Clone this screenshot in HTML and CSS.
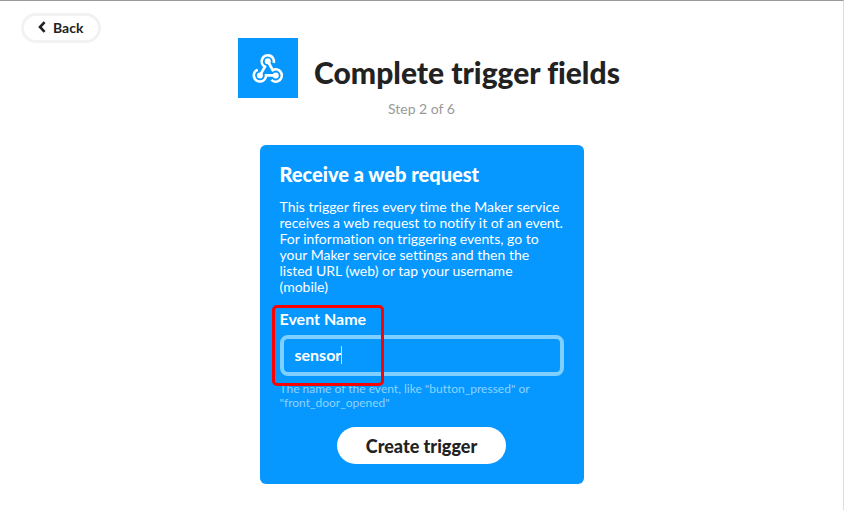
FILE: index.html
```html
<!DOCTYPE html>
<html lang="en">
<head>
<meta charset="utf-8">
<meta name="viewport" content="width=device-width, initial-scale=1">
<title>Complete trigger fields</title>
<link rel="stylesheet" href="styles.css">
</head>
<body>
<button class="back" type="button">
  <svg class="back-icon" viewBox="0 0 8 12" aria-hidden="true"><path d="M6.6 1.2 2 6l4.6 4.8"/></svg>
  Back
</button>
<main class="page">
  <header class="header">
    <div class="title-row">
      <div class="service">
        <svg class="service-icon" viewBox="0 0 31 30" aria-hidden="true">
          <path d="M7.7 21.7 12.5 13.3A5.9 5.9 0 1 1 21 9.6"/>
          <path d="M23 21.7H13.6A5.9 5.9 0 1 1 5.6 16.2"/>
          <path d="M15.3 8 20.1 16.6A5.9 5.9 0 1 1 18.8 26"/>
          <circle cx="15.3" cy="8" r="2.9"/>
          <circle cx="7.7" cy="21.7" r="2.9"/>
          <circle cx="23" cy="21.7" r="2.9"/>
        </svg>
      </div>
      <h1 class="title">Complete trigger fields</h1>
    </div>
    <p class="step">Step 2 of 6</p>
  </header>
  <form class="card">
    <h2 class="card-title">Receive a web request</h2>
    <p class="description">This trigger fires every time the Maker service<br>receives a web request to notify it of an event.<br>For information on triggering events, go to<br>your Maker service settings and then the<br>listed URL (web) or tap your username<br>(mobile)</p>
    <div class="field">
      <label class="label" for="event-name">Event Name</label>
      <input class="input" id="event-name" type="text" value="sensor" aria-describedby="event-help">
      <span class="caret"></span>
      <span class="highlight"></span>
    </div>
    <p class="help" id="event-help">The name of the event, like "button_pressed" or<br>"front_door_opened"</p>
    <button class="submit" type="button">Create trigger</button>
  </form>
</main>
</body>
</html>
```
FILE: styles.css
```css
* {
  box-sizing: border-box;
}

body {
  margin: 0;
  min-height: 100vh;
  position: relative;
  border-top: 1px solid #999;
  border-right: 1px solid #ddd;
  background: #fff;
  color: #222;
  font-family: Lato, "Liberation Sans", sans-serif;
  font-variant-ligatures: no-common-ligatures;
}

h1, h2, p {
  margin: 0;
}

.back {
  position: absolute;
  top: 12px;
  left: 21px;
  display: flex;
  align-items: center;
  gap: 7px;
  height: 30px;
  padding: 0 15px 2px 14px;
  border: 3px solid #f2f2f2;
  border-radius: 15px;
  background: #fff;
  color: #222;
  font: 700 14px Lato, sans-serif;
}

.back-icon {
  width: 8px;
  height: 12px;
  fill: none;
  stroke: #222;
  stroke-width: 2.6;
}

.page {
  display: flex;
  flex-direction: column;
  align-items: center;
  padding-top: 37px;
}

.header {
  text-align: center;
}

.title-row {
  display: flex;
  gap: 16px;
  padding-left: 15px;
}

.service {
  display: flex;
  align-items: center;
  justify-content: center;
  width: 60px;
  height: 60px;
  background: #0698ff;
}

.service-icon {
  width: 32px;
  height: 31px;
  fill: none;
  stroke: #fff;
  stroke-width: 2.6;
}

.service-icon circle {
  fill: #fff;
  stroke: none;
}

.title {
  padding-top: 17px;
  font-size: 30px;
  line-height: 34px;
  font-weight: 900;
}

.step {
  margin-top: 1px;
  color: #999;
  font-size: 14px;
  line-height: 20px;
}

.card {
  display: flex;
  flex-direction: column;
  width: 324px;
  margin-top: 26px;
  padding: 17px 20px 20px;
  border-radius: 6px;
  background: #0698ff;
  color: #fff;
}

.card-title {
  font-size: 20px;
  line-height: 24px;
  font-weight: 900;
}

.description {
  margin-top: 13px;
  font-size: 14px;
  line-height: 16px;
  white-space: nowrap;
}

.field {
  position: relative;
  display: flex;
  flex-direction: column;
  margin-top: 14px;
}

.label {
  font-size: 16px;
  line-height: 20px;
  font-weight: 700;
}

.input {
  width: 100%;
  height: 41px;
  margin-top: 6px;
  padding: 0 11px 2px;
  border: 4px solid #80d0ff;
  border-radius: 8px;
  outline: none;
  background: transparent;
  color: #fff;
  font: 700 16px Lato, sans-serif;
}

.caret {
  position: absolute;
  top: 37px;
  left: 61px;
  width: 1px;
  height: 18px;
  background: #b4e1ff;
}

.highlight {
  position: absolute;
  top: -4px;
  left: -8px;
  width: 112px;
  height: 81px;
  border: 3px solid #ff0000;
  border-radius: 5px;
}

.help {
  margin-top: 6px;
  color: #8cd3ff;
  font-size: 12px;
  line-height: 14px;
  white-space: nowrap;
}

.submit {
  align-self: center;
  height: 37px;
  margin-top: 17px;
  padding: 0 29px;
  border: 0;
  border-radius: 19px;
  background: #fff;
  color: #222;
  font: 900 18px Lato, sans-serif;
}
```
